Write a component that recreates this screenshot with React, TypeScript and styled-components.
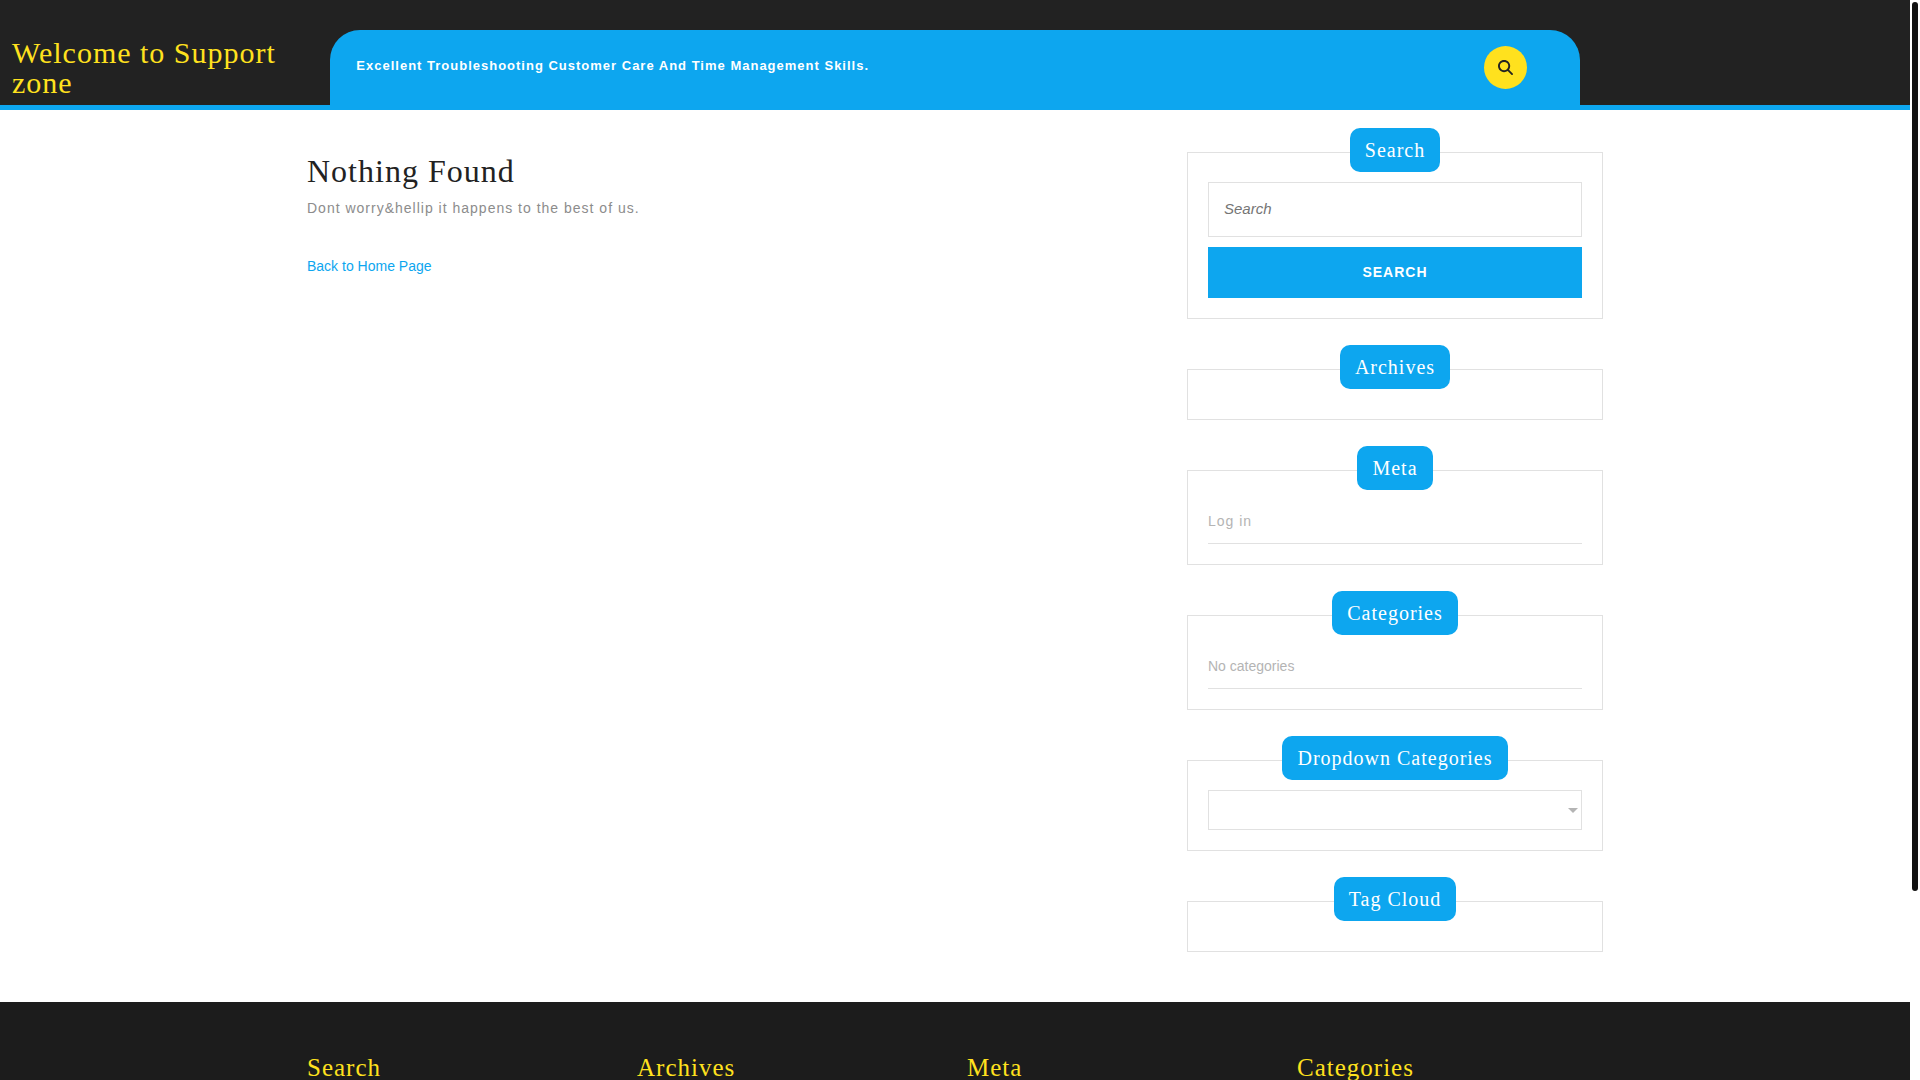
import React from "react";
import styled, { createGlobalStyle } from "styled-components";

const blue = "#0da6ef";
const yellow = "#ffe11e";
const line = "#e1e1e1";
const serif = '"Liberation Serif", "Times New Roman", serif';
const sans = '"Liberation Sans", Arial, sans-serif';

const GlobalStyle = createGlobalStyle`
  *, *::before, *::after { box-sizing: border-box; }
  body {
    margin: 0;
    background: #fff;
    color: #8c8c8c;
    font-family: ${sans};
    font-size: 14px;
    line-height: 21px;
  }
  h1, h2, h3, p, ul { margin: 0; padding: 0; font-weight: 400; }
  a { text-decoration: none; }
`;

const Shell = styled.div`
  display: grid;
  grid-template-columns: minmax(0, 1fr) 10px;
  height: 100vh;
`;

const Scroller = styled.div`
  overflow-y: auto;
  scrollbar-width: none;
`;

const Rail = styled.div`
  padding: 2px;
  background: #fff;
`;

const Thumb = styled.div`
  height: calc(100% * 19 / 23);
  border-radius: 3px;
  background: #111;
`;

const Header = styled.header`
  display: grid;
  grid-template-columns: 2fr 8fr 2fr;
  background: #222;
  border-bottom: 5px solid ${blue};
`;

const SiteTitle = styled.h1`
  padding: 38px 12px 7px;
  font-family: ${serif};
  font-size: 30px;
  line-height: 30px;
  letter-spacing: 1px;
  a { color: ${yellow}; }
`;

const NavBar = styled.div`
  display: flex;
  justify-content: space-between;
  align-items: flex-start;
  margin: 30px 12px 0;
  padding: 16px 53px 0 26px;
  border-radius: 30px 30px 0 0;
  background: ${blue};
`;

const Tagline = styled.p`
  padding-top: 9px;
  color: #fff;
  font-size: 13px;
  font-weight: 700;
  letter-spacing: 1px;
`;

const RoundButton = styled.button`
  display: flex;
  align-items: center;
  justify-content: center;
  width: 43px;
  height: 43px;
  padding: 0;
  border: 0;
  border-radius: 50%;
  background: ${yellow};
  color: #222;
  cursor: pointer;
`;

const Container = styled.div`
  width: 100%;
  max-width: 1320px;
  margin: 0 auto;
  padding: 0 12px;
`;

const Columns = styled(Container)`
  display: grid;
  grid-template-columns: minmax(0, 2fr) minmax(0, 1fr);
  padding: 0;
`;

const Content = styled.main`
  padding: 42px 12px;
`;

const PageTitle = styled.h2`
  color: #222;
  font-family: ${serif};
  font-size: 32px;
  line-height: 38px;
  letter-spacing: 1px;
`;

const Message = styled.p`
  margin: 8px 0 37px;
  letter-spacing: 1px;
`;

const TextLink = styled.a`
  color: ${blue};
`;

const Sidebar = styled.aside`
  display: flex;
  flex-direction: column;
  gap: 50px;
  padding: 42px 12px 50px;
`;

const WidgetBox = styled.section`
  display: flex;
  flex-direction: column;
  padding: 20px;
  border: 1px solid ${line};
`;

const WidgetTitle = styled.h3`
  align-self: center;
  margin: -45px 0 10px;
  padding: 10px 15px;
  border-radius: 10px;
  background: ${blue};
  color: #fff;
  font-family: ${serif};
  font-size: 20px;
  line-height: 24px;
  letter-spacing: 1px;
`;

const SearchForm = styled.form`
  display: grid;
  gap: 10px;
`;

const SearchField = styled.input`
  width: 100%;
  height: 55px;
  padding: 0 15px 2px;
  border: 1px solid ${line};
  border-radius: 0;
  background: #fff;
  font-family: ${sans};
  font-size: 15px;
  font-style: italic;
  &::placeholder { color: #757575; }
`;

const SubmitButton = styled.button`
  height: 51px;
  padding: 0 15px 2px;
  border: 0;
  background: ${blue};
  color: #fff;
  font-family: ${sans};
  font-size: 14px;
  font-weight: 700;
  letter-spacing: 1px;
  text-transform: uppercase;
  cursor: pointer;
`;

const List = styled.ul`
  list-style: none;
`;

const Item = styled.li`
  padding: 11px 0;
  border-bottom: 1px solid ${line};
  color: #b4b4b4;
  a { color: inherit; letter-spacing: 1px; }
`;

const SelectFrame = styled.div`
  display: grid;
  align-items: center;
  > * { grid-area: 1 / 1; }
`;

const Select = styled.select`
  width: 100%;
  height: 40px;
  border: 1px solid ${line};
  border-radius: 0;
  background: #fff;
  appearance: none;
`;

const Caret = styled.span`
  justify-self: end;
  margin-right: 4px;
  border: 5px solid transparent;
  border-top-color: #b4b4b4;
  border-bottom: 0;
  pointer-events: none;
`;

const Footer = styled.footer`
  padding: 50px 0 200px;
  background: #1c1c1c;
`;

const FooterColumns = styled(Container)`
  display: grid;
  grid-template-columns: repeat(4, minmax(0, 1fr));
  gap: 24px;
`;

const FooterTitle = styled.h3`
  color: ${yellow};
  font-family: ${serif};
  font-size: 25px;
  line-height: 32px;
  letter-spacing: 1px;
`;

function Widget({ title, children }: { title: string; children?: React.ReactNode }) {
  return (
    <WidgetBox>
      <WidgetTitle>{title}</WidgetTitle>
      {children}
    </WidgetBox>
  );
}

function SearchIcon() {
  return (
    <svg width="15" height="15" viewBox="0 0 512 512" fill="currentColor" aria-hidden="true">
      <path d="M416 208c0 45.9-14.9 88.3-40 122.7L502.6 457.4c12.5 12.5 12.5 32.8 0 45.3s-32.8 12.5-45.3 0L330.7 376c-34.4 25.2-76.8 40-122.7 40C93.1 416 0 322.9 0 208S93.1 0 208 0S416 93.1 416 208zM208 352a144 144 0 1 0 0-288 144 144 0 1 0 0 288z" />
    </svg>
  );
}

export default function App() {
  return (
    <>
      <GlobalStyle />
      <Shell>
        <Scroller>
          <Header>
            <SiteTitle>
              <a href="#home">Welcome to Support zone</a>
            </SiteTitle>
            <NavBar>
              <Tagline>Excellent Troubleshooting Customer Care And Time Management Skills.</Tagline>
              <RoundButton type="button" aria-label="Open search">
                <SearchIcon />
              </RoundButton>
            </NavBar>
          </Header>

          <Columns>
            <Content>
              <PageTitle>Nothing Found</PageTitle>
              <Message>{"Dont worry&hellip it happens to the best of us."}</Message>
              <TextLink href="#home">Back to Home Page</TextLink>
            </Content>

            <Sidebar>
              <Widget title="Search">
                <SearchForm role="search" onSubmit={(e) => e.preventDefault()}>
                  <SearchField type="search" placeholder="Search" aria-label="Search for" />
                  <SubmitButton type="submit">Search</SubmitButton>
                </SearchForm>
              </Widget>
              <Widget title="Archives" />
              <Widget title="Meta">
                <List>
                  <Item>
                    <a href="#login">Log in</a>
                  </Item>
                </List>
              </Widget>
              <Widget title="Categories">
                <List>
                  <Item>No categories</Item>
                </List>
              </Widget>
              <Widget title="Dropdown Categories">
                <SelectFrame>
                  <Select aria-label="Dropdown Categories" />
                  <Caret />
                </SelectFrame>
              </Widget>
              <Widget title="Tag Cloud" />
            </Sidebar>
          </Columns>

          <Footer>
            <FooterColumns>
              {["Search", "Archives", "Meta", "Categories"].map((title) => (
                <FooterTitle key={title}>{title}</FooterTitle>
              ))}
            </FooterColumns>
          </Footer>
        </Scroller>
        <Rail aria-hidden="true">
          <Thumb />
        </Rail>
      </Shell>
    </>
  );
}
